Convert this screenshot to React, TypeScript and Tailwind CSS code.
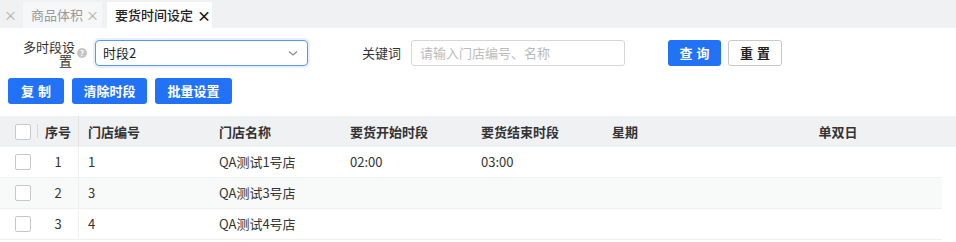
import React from "react";

const cols = "grid-cols-[38px_41px_131px_131px_131px_131px_131px_208px]";

function Checkbox() {
  return <div className="w-[16px] h-[16px] border border-[#c8c8c8] rounded-[2px] bg-white" />;
}

const rows = [
  { seq: 1, no: "1", name: "QA测试1号店", start: "02:00", end: "03:00" },
  { seq: 2, no: "3", name: "QA测试3号店", start: "", end: "" },
  { seq: 3, no: "4", name: "QA测试4号店", start: "", end: "" },
];

export default function App() {
  return (
    <div
      className="w-[956px] h-[242px] bg-white overflow-hidden text-[13px] text-[#333]"
      style={{ fontFamily: '"Noto Sans CJK SC", "Noto Sans", sans-serif' }}
    >
      {/* Tab bar */}
      <div className="h-[28px] bg-[#f0f1f3] flex items-end">
        <div className="w-[23px] h-[26px] flex items-center pl-[4px] text-[#aaa] text-[13px]">×</div>
        <div className="h-[26px] w-[79px] bg-[#f6f7f8] flex items-center pl-[8px] text-[#999] gap-[3px]">
          <span>商品体积</span>
          <span className="text-[#aaa]">×</span>
        </div>
        <div className="ml-[5px] h-[26px] w-[105px] bg-white flex items-center pl-[8px] gap-[4px] text-[#222]">
          <span className="font-medium">要货时间设定</span>
          <span className="font-bold text-[#111] text-[14px]">×</span>
        </div>
      </div>

      {/* Filter row */}
      <div className="flex items-center h-[26px] mt-[12px]">
        <div className="w-[75px] flex flex-col items-end gap-[1px] leading-[13px] text-[#333]">
          <span>多时段设</span>
          <span className="pr-[3px]">置</span>
        </div>
        <div className="w-[10px] h-[10px] ml-[2px] rounded-full bg-[#c4c4c4] text-white text-[8px] leading-[10px] text-center font-bold">?</div>
        <div className="ml-[8px] w-[213px] h-[26px] border border-[#5b94f6] rounded-[4px] shadow-[0_0_0_2px_rgba(64,128,255,0.12)] flex items-center justify-between pl-[7px] pr-[8px]">
          <span className="text-[#222]">时段2</span>
          <svg width="12" height="12" viewBox="0 0 12 12" fill="none">
            <path d="M2 4.5 L6 8 L10 4.5" stroke="#888" strokeWidth="1.2" />
          </svg>
        </div>
        <span className="ml-[54px] text-[#333]">关键词</span>
        <div className="ml-[10px] w-[214px] h-[26px] border border-[#d6d6d6] rounded-[3px] flex items-center pl-[8px] text-[#bbb]">
          请输入门店编号、名称
        </div>
        <button className="ml-[43px] w-[53px] h-[26px] rounded-[3px] bg-[#2172f7] text-white font-bold tracking-[4px] pl-[4px]">查询</button>
        <button className="ml-[7px] w-[54px] h-[26px] rounded-[3px] border border-[#c9c9c9] bg-white text-[#222] font-bold tracking-[4px] pl-[4px]">重置</button>
      </div>

      {/* Action buttons */}
      <div className="flex items-center gap-[8px] pl-[8px] mt-[12px]">
        <button className="w-[56px] h-[26px] rounded-[3px] bg-[#2172f7] text-white font-bold tracking-[4px] pl-[4px]">复制</button>
        <button className="w-[75px] h-[26px] rounded-[3px] bg-[#2172f7] text-white font-bold">清除时段</button>
        <button className="w-[77px] h-[26px] rounded-[3px] bg-[#2172f7] text-white font-bold">批量设置</button>
      </div>

      {/* Table */}
      <div className="mt-[12px]">
        <div className="bg-[#f0f1f3] h-[31px] w-[956px]">
          <div className={`grid ${cols} h-full items-center font-bold text-[#333]`}>
            <div className="flex items-center pl-[15px] relative h-full">
              <Checkbox />
              <div className="absolute right-0 top-[8px] h-[14px] w-px bg-[#d8d8d8]" />
            </div>
            <div className="text-center border-r border-[#e2e2e2] h-full flex items-center justify-center">序号</div>
            <div className="pl-[9px]">门店编号</div>
            <div className="pl-[9px]">门店名称</div>
            <div className="pl-[9px]">要货开始时段</div>
            <div className="pl-[9px]">要货结束时段</div>
            <div className="pl-[9px]">星期</div>
            <div className="text-center">单双日</div>
          </div>
        </div>
        {rows.map((r, i) => (
          <div
            key={r.seq}
            className={`grid ${cols} w-[942px] h-[31px] items-center border-b border-[#f0f0f0] ${i === 1 ? "bg-[#f8f9f9]" : "bg-white"}`}
          >
            <div className="flex items-center pl-[15px]">
              <Checkbox />
            </div>
            <div className="text-center border-r border-[#f0f0f0] h-full flex items-center justify-center text-[#333]">{r.seq}</div>
            <div className="pl-[9px]">{r.no}</div>
            <div className="pl-[9px]">{r.name}</div>
            <div className="pl-[9px]">{r.start}</div>
            <div className="pl-[9px]">{r.end}</div>
            <div />
            <div />
          </div>
        ))}
      </div>
    </div>
  );
}
